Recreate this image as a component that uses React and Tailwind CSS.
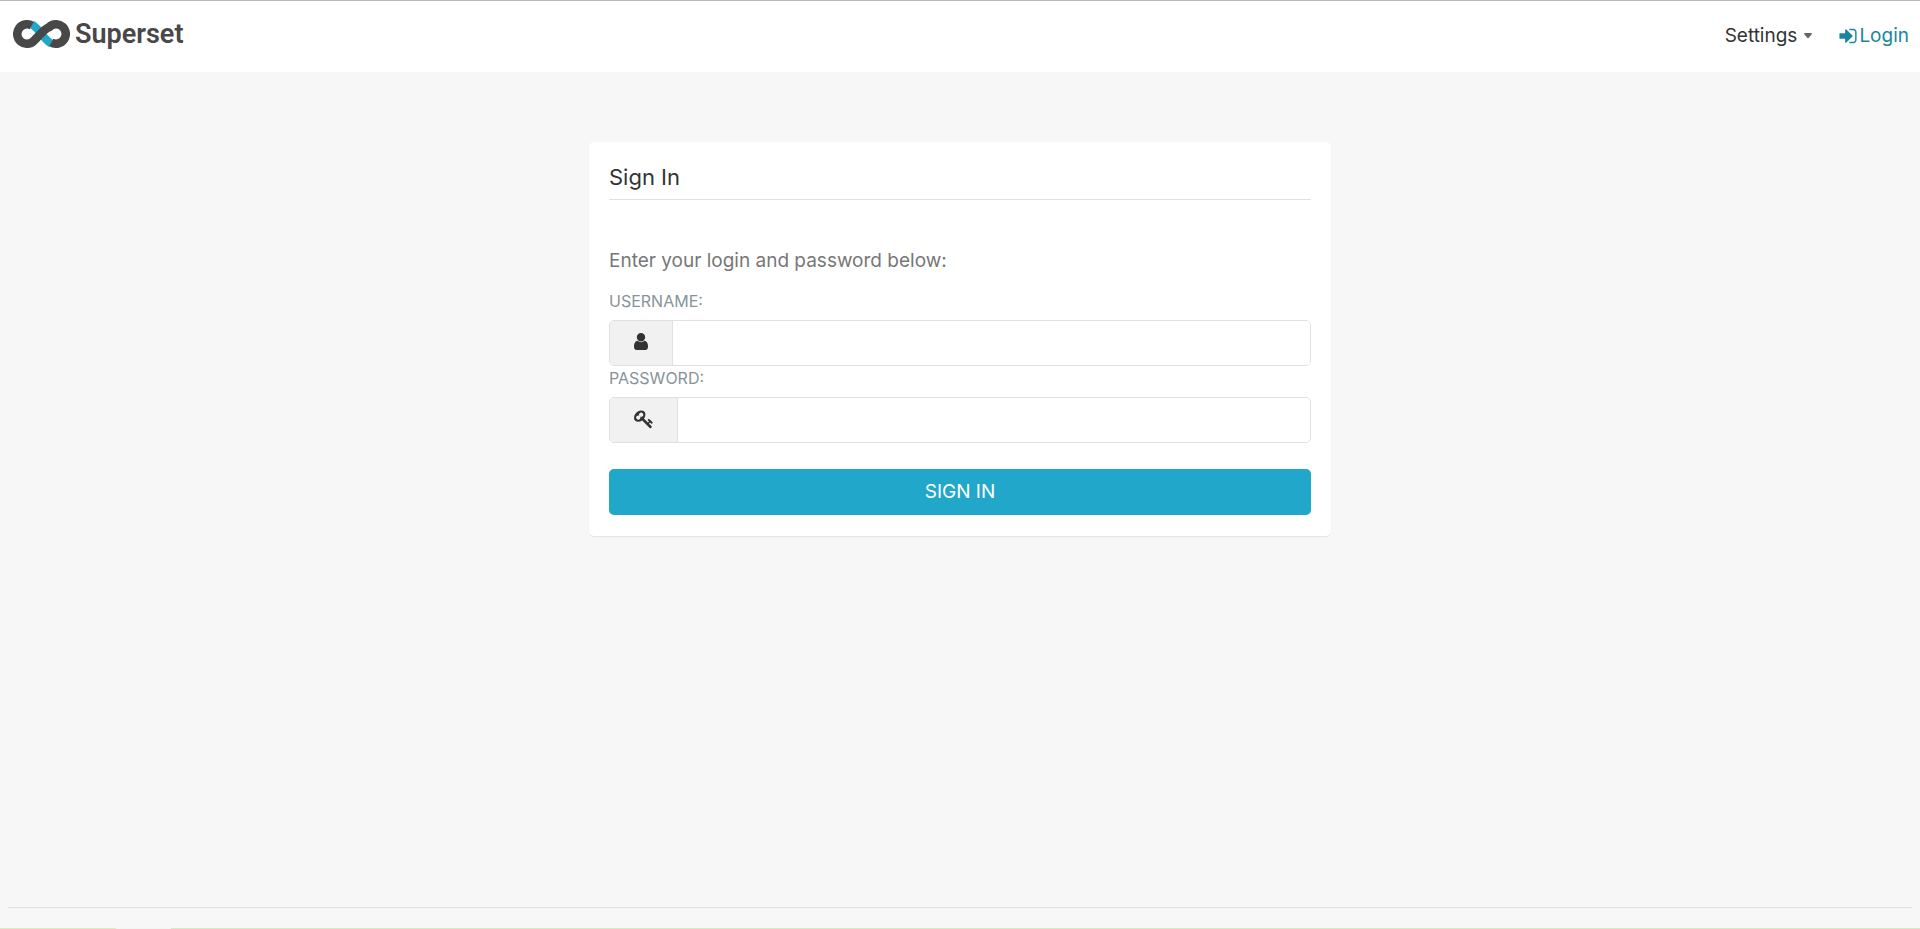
const navLinks = [{ label: "Login", href: "#login" }];

function SupersetMark() {
  return (
    <svg viewBox="0 0 57 28" className="h-7 w-[57px]" fill="none" aria-hidden="true">
      <path d="M19 4.500Q21.500 6 24 8.700L33 19.300Q35.500 22 38 23.500" stroke="#20a7c9" strokeWidth="8" />
      <path
        d="M18.800 5.600A9.700 9.700 0 1 0 20.800 20.900C24 18 31.500 8.500 36.200 7.100A9.700 9.700 0 1 1 38.200 22.400"
        stroke="#484848"
        strokeWidth="8.600"
      />
    </svg>
  );
}

function LoginIcon() {
  return (
    <svg viewBox="0 0 1792 1792" className="size-5" fill="currentColor" aria-hidden="true">
      <path d="M1312 896q0 26-19 45l-544 544q-19 19-45 19t-45-19-19-45v-288h-448q-26 0-45-19t-19-45v-384q0-26 19-45t45-19h448v-288q0-26 19-45t45-19 45 19l544 544q19 19 19 45zm352-352v704q0 119-84.500 203.500t-203.500 84.500h-320q-13 0-22.500-9.500t-9.500-22.500q0-4-1-20t-.5-26.500 3-23.500 10-19.500 20.500-6.500h320q66 0 113-47t47-113v-704q0-66-47-113t-113-47h-312l-11.500-1-11.500-3-8-5.500-7-9-2-13.500q0-4-1-20t-.5-26.500 3-23.500 10-19.500 20.500-6.500h320q119 0 203.500 84.500t84.500 203.500z" />
    </svg>
  );
}

function UserIcon() {
  return (
    <svg viewBox="256 128 1280 1536" className="h-[17px] w-[14px]" fill="currentColor" aria-hidden="true">
      <path d="M1536 1399q0 109-62.500 187t-150.500 78h-854q-88 0-150.500-78t-62.500-187q0-85 8.500-160.500t31.500-152 58.500-131 94-89 134.500-34.500q131 128 313 128t313-128q76 0 134.500 34.500t94 89 58.500 131 31.500 152 8.500 160.500zm-256-887q0 159-112.500 271.500t-271.500 112.500-271.500-112.500-112.500-271.500 112.500-271.500 271.500-112.500 271.500 112.500 112.500 271.500z" />
    </svg>
  );
}

function KeyIcon() {
  return (
    <svg viewBox="0 0 1792 1792" className="size-5" fill="currentColor" aria-hidden="true">
      <path d="M832 512q0-80-56-136t-136-56-136 56-56 136q0 42 19 83-41-19-83-19-80 0-136 56t-56 136 56 136 136 56 136-56 56-136q0-42-19-83 41 19 83 19 80 0 136-56t56-136zm851 704q0 17-49 66t-66 49q-9 0-28.500-16t-36.500-33-38.500-40-24.500-26l-96 96 220 220q28 28 28 68 0 42-39 81t-81 39q-40 0-68-28l-671-671q-176 131-365 131-163 0-265.500-102.500t-102.500-265.500q0-160 95-313t248-248 313-95q163 0 265.500 102.500t102.500 265.500q0 189-131 365l355 355 96-96q-3-3-26-24.500t-40-38.500-33-36.500-16-28.500q0-17 49-66t66-49q13 0 23 10 6 6 46 44.500t82 79.500 86.500 86 73 78 28.500 41z" />
    </svg>
  );
}

function Field({ id, label, type, icon, addonClass }) {
  return (
    <div>
      <label htmlFor={id} className="block pb-[7px] text-base leading-6 text-[#879399]">
        {label}
      </label>
      <div className="flex h-[46px] overflow-hidden rounded-[5px] border border-[#e0e0e0]">
        <span className={`flex items-center justify-center border-r border-[#e0e0e0] bg-[#f1f1f1] pb-[3px] text-[#333333] ${addonClass}`}>
          {icon}
        </span>
        <input id={id} name={id} type={type} className="min-w-0 flex-1 bg-white px-4 text-lg outline-none" />
      </div>
    </div>
  );
}

export default function App() {
  return (
    <div className="flex min-h-screen flex-col bg-[#f7f7f7] font-[Inter,sans-serif] text-[#333333]">
      <header className="flex h-[72px] items-center justify-between border-t border-[#b8b8b8] bg-white pr-[11px] pb-[2px] pl-[13px]">
        <a href="#home" className="flex items-center gap-[5px] pb-[3px]">
          <SupersetMark />
          <span className="font-[Roboto,sans-serif] text-[27px] leading-8 font-semibold text-[#484848]">Superset</span>
        </a>
        <nav className="flex items-center gap-[26px] text-[19px] leading-6">
          <button type="button" className="flex items-center gap-[7px]">
            Settings
            <svg viewBox="0 0 8 5" className="h-[5px] w-2" fill="#666666" aria-hidden="true">
              <path d="M1 0h6q1 0 1 1L4.500 5h-1L0 1q0-1 1-1z" />
            </svg>
          </button>
          {navLinks.map((link) => (
            <a key={link.label} href={link.href} className="flex items-center gap-px text-[#1a85a0]">
              <LoginIcon />
              {link.label}
            </a>
          ))}
        </nav>
      </header>

      <main className="flex-1 px-2 pt-[70px]">
        <section className="mx-auto w-full max-w-[742px] rounded-[5px] bg-white px-5 pt-5 pb-[21px] shadow-[0_1px_1px_rgba(0,0,0,0.08)]">
          <h1 className="border-b border-[#e0e0e0] pb-[7px] text-[22px] leading-[30px]">Sign In</h1>
          <form onSubmit={(e) => e.preventDefault()}>
            <p className="pt-[49px] pb-4 text-[19px] leading-6 text-[#777777]">Enter your login and password below:</p>
            <Field id="username" label="USERNAME:" type="text" icon={<UserIcon />} addonClass="w-[63px]" />
            <Field id="password" label="PASSWORD:" type="password" icon={<KeyIcon />} addonClass="w-[68px]" />
            <button type="submit" className="mt-[26px] h-[46px] w-full rounded-[5px] bg-[#20a7c9] text-[19px] leading-6 text-white">
              SIGN IN
            </button>
          </form>
        </section>
      </main>

      <footer className="px-2">
        <hr className="border-[#e0e0e0]" />
        <div className="h-5" />
      </footer>
      <div className="flex h-px">
        <div className="w-[116px] bg-[#dcebbf]" />
        <div className="w-[55px] bg-[#f0f7ee]" />
        <div className="flex-1 bg-[#d5e9c4]" />
      </div>
    </div>
  );
}
